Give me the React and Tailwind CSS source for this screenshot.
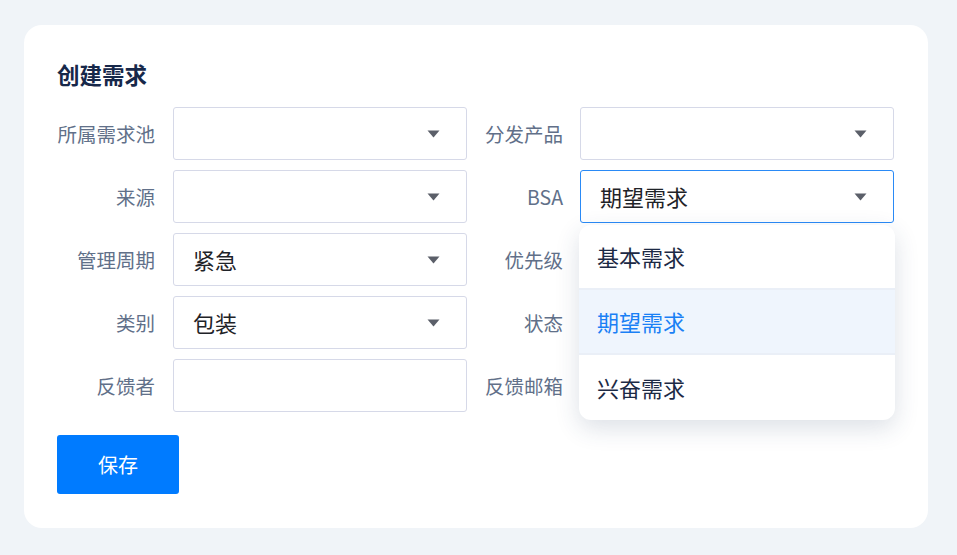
import React from "react";

const font = { fontFamily: '"Noto Sans CJK SC", "Noto Sans", sans-serif' };

function Caret() {
  return (
    <svg width="13" height="8" viewBox="0 0 13 8" className="shrink-0">
      <path d="M0.5 0.5h12L6.5 7.5z" fill="#5b5f69" />
    </svg>
  );
}

function Label({ text, right }) {
  return (
    <div
      className={`flex items-center justify-end text-[19.5px] text-[#617089] ${right ? "pr-[17px]" : "pr-[18px]"}`}
    >
      {text}
    </div>
  );
}

function Select({ value, active }) {
  return (
    <div
      className={`h-[53px] flex items-center justify-between pl-[19px] pr-[26px] rounded-[3px] bg-white ${
        active ? "border-[1.5px] border-[#2a8af6]" : "border-[1.5px] border-[#d6d9e8]"
      }`}
    >
      <span className="text-[22px] text-[#1f2328]">{value}</span>
      <Caret />
    </div>
  );
}

function Input() {
  return <div className="h-[53px] rounded-[3px] bg-white border-[1.5px] border-[#d6d9e8]" />;
}

const options = ["基本需求", "期望需求", "兴奋需求"];

export default function App() {
  return (
    <div className="w-[957px] h-[555px] bg-[#f0f4f8] pt-[25px] pl-[24px]" style={font}>
      <div className="w-[904px] h-[503px] bg-white rounded-[18px] pt-[34px] pl-[33px]">
        <h2 className="text-[22.5px] leading-[30px] font-semibold text-[#17284a]">创建需求</h2>

        <div className="mt-[18px] grid grid-cols-[116px_294px_113px_314px] gap-y-[10px]">
          <Label text="所属需求池" />
          <Select value="" />
          <Label text="分发产品" right />
          <Select value="" />

          <Label text="来源" />
          <Select value="" />
          <Label text="BSA" right />
          <div className="relative z-10">
            <Select value="期望需求" active />
            <div className="absolute top-[calc(100%+2px)] -left-px -right-px rounded-[12px] bg-white overflow-hidden shadow-[0_8px_24px_rgba(40,60,100,0.16)]">
              {options.map((o, i) => (
                <div
                  key={o}
                  className={`h-[65px] flex items-center pl-[18px] text-[22px] ${
                    i < 2 ? "border-b-2 border-[#eaeff7]" : ""
                  } ${i === 1 ? "bg-[#eff5fd] text-[#1a80f5]" : "text-[#1c2a45]"}`}
                >
                  {o}
                </div>
              ))}
            </div>
          </div>

          <Label text="管理周期" />
          <Select value="紧急" />
          <Label text="优先级" right />
          <Select value="" />

          <Label text="类别" />
          <Select value="包装" />
          <Label text="状态" right />
          <Select value="" />

          <Label text="反馈者" />
          <Input />
          <Label text="反馈邮箱" right />
          <Input />
        </div>

        <button className="mt-[23px] w-[122px] h-[59px] rounded-[3px] bg-[#007bff] text-white text-[20px]">
          保存
        </button>
      </div>
    </div>
  );
}
